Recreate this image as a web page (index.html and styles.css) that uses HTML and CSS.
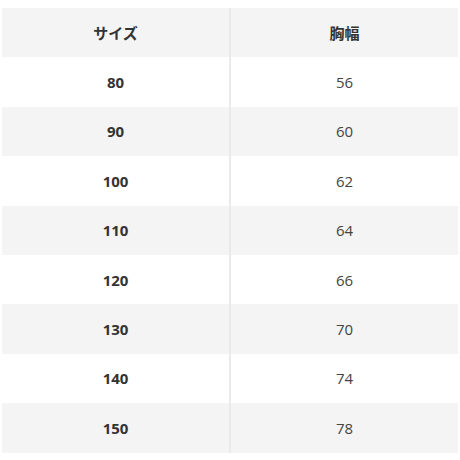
FILE: index.html
```html
<!DOCTYPE html>
<html lang="ja">
<head>
<meta charset="utf-8">
<link rel="stylesheet" href="styles.css">
</head>
<body>
<table class="size-table">
  <thead>
    <tr><th>サイズ</th><th>胸幅</th></tr>
  </thead>
  <tbody>
    <tr><th>80</th><td>56</td></tr>
    <tr><th>90</th><td>60</td></tr>
    <tr><th>100</th><td>62</td></tr>
    <tr><th>110</th><td>64</td></tr>
    <tr><th>120</th><td>66</td></tr>
    <tr><th>130</th><td>70</td></tr>
    <tr><th>140</th><td>74</td></tr>
    <tr><th>150</th><td>78</td></tr>
  </tbody>
</table>
</body>
</html>
```
FILE: styles.css
```css
html, body {
  margin: 0;
  padding: 0;
  background: #ffffff;
}
body {
  padding: 8px 2px 0 2px;
  font-family: "Open Sans", "Noto Sans CJK JP", sans-serif;
  color: #333333;
}
.size-table {
  width: 456px;
  border-collapse: collapse;
  table-layout: fixed;
}
.size-table th,
.size-table td {
  height: 49.4px;
  padding: 0;
  text-align: center;
  vertical-align: middle;
  font-size: 15px;
  line-height: 20px;
}
.size-table th {
  font-weight: 700;
  color: #333333;
}
.size-table td {
  font-weight: 400;
  color: #444444;
}
.size-table tr > :first-child {
  width: 227px;
  border-right: 2px solid #eaeaea;
}
.size-table thead tr,
.size-table tbody tr:nth-child(even) {
  background: #f4f4f4;
}
```
